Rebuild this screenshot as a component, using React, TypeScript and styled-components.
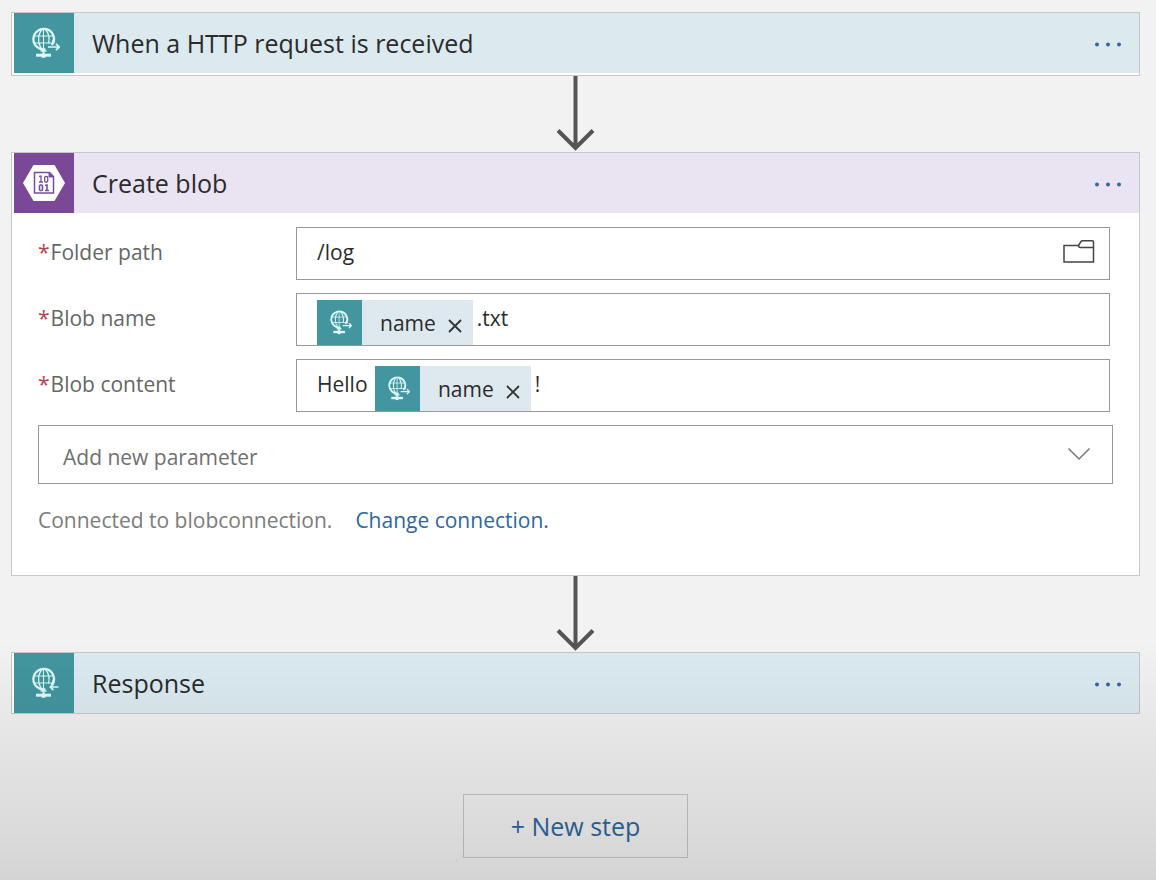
import React from "react";
import styled, { createGlobalStyle } from "styled-components";

const GlobalStyle = createGlobalStyle`
  *, *::before, *::after { box-sizing: border-box; }
  body {
    margin: 0;
    background: #f2f2f2;
    font-family: "Segoe UI", "Open Sans", "Noto Sans", sans-serif;
    font-size: 21px;
    line-height: 30px;
    color: #2b2b2b;
  }
  button, input, select { font: inherit; color: inherit; }
`;

const Designer = styled.main`
  display: flex;
  flex-direction: column;
  min-height: 100vh;
  padding: 12px 16px 22px 11px;

  &::after {
    content: "";
    position: fixed;
    inset: auto 0 0 0;
    height: 240px;
    background: linear-gradient(rgba(0, 0, 0, 0), rgba(0, 0, 0, 0.12));
    pointer-events: none;
  }
`;

const Card = styled.section<{ $trigger?: boolean }>`
  border: 1px solid #c4c8c9;
  padding: 0 0 ${(p) => (p.$trigger ? "2px" : "0")} 2px;
  background: #fff;
`;

const CardHeader = styled.header<{ $tint: string }>`
  display: flex;
  align-items: center;
  height: 60px;
  padding-right: 15px;
  background: ${(p) => p.$tint};
`;

const IconTile = styled.span<{ $color: string; $size: number }>`
  display: grid;
  place-items: center;
  flex: none;
  width: ${(p) => p.$size}px;
  height: ${(p) => p.$size}px;
  background: ${(p) => p.$color};
`;

const CardTitle = styled.h2`
  flex: 1;
  margin: 0 0 0 18px;
  font-size: 25px;
  line-height: 34px;
  font-weight: 400;
`;

const IconButton = styled.button`
  display: grid;
  place-items: center;
  padding: 4px 2px;
  border: 0;
  background: none;
  cursor: pointer;
`;

const ArrowRow = styled.div`
  display: flex;
  justify-content: center;
  height: 76px;
`;

const CardBody = styled.form`
  display: flex;
  flex-direction: column;
  gap: 13px;
  padding: 14px 26px 40px 24px;
`;

const FieldRow = styled.div`
  display: grid;
  grid-template-columns: 258px 1fr;
  padding-right: 3px;
`;

const Label = styled.label`
  padding-top: 10px;
  color: #666;
`;

const Required = styled.span`
  margin-right: 1px;
  color: #b8414f;
`;

const FieldBox = styled.div`
  display: flex;
  align-items: center;
  height: 53px;
  padding: 0 12px 0 20px;
  border: 1px solid #999;
  background: #fff;

  > input, > button { margin-bottom: 4px; }
`;

const TextInput = styled.input<{ $grow?: boolean }>`
  flex: ${(p) => (p.$grow ? "1" : "none")};
  field-sizing: ${(p) => (p.$grow ? "fixed" : "content")};
  min-width: 0;
  height: 46px;
  padding: 0;
  border: 0;
  outline: 0;
  background: none;
`;

const Token = styled.span`
  display: flex;
  align-items: center;
  align-self: flex-end;
  height: 45px;
  margin-right: 4px;
  background: #dde9ef;

  input + & { margin-left: 2px; }
`;

const TokenName = styled.span`
  margin: 0 10px 0 18px;
`;

const TokenRemove = styled.button`
  display: grid;
  place-items: center;
  margin: 6px 9px 0 0;
  padding: 2px;
  border: 0;
  background: none;
  cursor: pointer;
`;

const SelectBox = styled.div`
  display: grid;
  align-items: center;

  > * { grid-area: 1 / 1; }
  > svg { justify-self: end; margin: 0 22px 2px 0; pointer-events: none; }
`;

const Select = styled.select`
  appearance: none;
  width: 100%;
  height: 59px;
  padding: 4px 24px 0;
  border: 1px solid #999;
  border-radius: 0;
  background: #fff;
  color: #707070;
`;

const Connection = styled.p`
  display: flex;
  gap: 23px;
  margin: 8px 0 0;
  color: #7c7c7c;
`;

const Link = styled.a`
  color: #2d679f;
  text-decoration: none;
`;

const NewStep = styled.button`
  align-self: center;
  min-width: 225px;
  height: 64px;
  margin-top: 80px;
  border: 1px solid #c6c6c6;
  background: none;
  color: #2d679f;
  font-size: 25px;
  cursor: pointer;
`;

const TEAL = "#43969f";

function Globe({ size, response }: { size: number; response?: boolean }) {
  return (
    <svg width={size} height={size} viewBox="0 0 32 32" fill="none" stroke="#dcf8f9" aria-hidden="true">
      <path d="M24.800 17A10.300 10.300 0 1 0 17.500 22.300" strokeWidth="2.300" />
      <path d="M15.500 2v20.500M6.500 9h18.500M6.500 16h18" strokeWidth="1" />
      <path d="M14 2.500c-4.500 5-4.500 14.500 0 19.500M17.500 2.500c3.500 4 4.300 8.500 3 14" strokeWidth="1.300" />
      <path d="M25.500 12.500q.3 3-1.800 5.500" strokeWidth="2.200" />
      {response ? (
        <path d="M30.500 20h-8.500M25.500 16.800l-3.200 3.200 3.200 3.200" strokeWidth="1.700" />
      ) : (
        <path d="M20 20h11M28 16.800l3.200 3.200-3.200 3.200" strokeWidth="1.700" />
      )}
      <path d="M15.500 22v5M12.500 24h6" strokeWidth="1.700" />
      <path d="M8 28.200h15" strokeWidth="3" />
      <circle cx="15.500" cy="28.500" r="2.500" fill="#dcf8f9" stroke="none" />
    </svg>
  );
}

function BlobIcon() {
  return (
    <svg width="42" height="38" viewBox="0 0 42 38" fill="none" aria-hidden="true">
      <path d="M10.500 1h21L42 19 31.500 37h-21L0 19z" fill="#fff" />
      <path d="M11.500 8.500h15l4 4v16.500h-19z" stroke="#74509a" strokeWidth="1.500" />
      <path d="M26 8.500v4.500h5z" fill="#74509a" stroke="#74509a" />
      <g stroke="#74509a" strokeWidth="1.300">
        <path d="M16 12.500l2-.5v6M16 18h4" />
        <rect x="21.700" y="12.500" width="3" height="5.500" rx="1" />
        <g strokeWidth="1.600">
          <rect x="16.500" y="21" width="3" height="5.500" rx="1" />
          <path d="M22 21.500l2-.5v6M22 26.500h4" />
        </g>
      </g>
    </svg>
  );
}

function Header({ title, tint, color, children }: { title: string; tint: string; color: string; children: React.ReactNode }) {
  return (
    <CardHeader $tint={tint}>
      <IconTile $color={color} $size={60}>{children}</IconTile>
      <CardTitle>{title}</CardTitle>
      <IconButton type="button" aria-label={`${title} menu`}>
        <svg width="28" height="10" viewBox="0 0 28 10" fill="#33689f" aria-hidden="true">
          <circle cx="3" cy="6.500" r="2" />
          <circle cx="14" cy="6.500" r="2" />
          <circle cx="25" cy="6.500" r="2" />
        </svg>
      </IconButton>
    </CardHeader>
  );
}

function Arrow() {
  return (
    <ArrowRow>
      <svg width="41" height="76" viewBox="0 0 41 76" fill="none" stroke="#555" strokeWidth="4" aria-hidden="true">
        <path d="M20.500 0v72M3 54.500l17.500 17.500 17.500-17.500" />
      </svg>
    </ArrowRow>
  );
}

function NameToken() {
  return (
    <Token>
      <IconTile $color={TEAL} $size={45}>
        <Globe size={25} />
      </IconTile>
      <TokenName>name</TokenName>
      <TokenRemove type="button" aria-label="Remove name">
        <svg width="14" height="14" viewBox="0 0 14 14" stroke="#333" strokeWidth="1.800" aria-hidden="true">
          <path d="M1 1l12 12M13 1L1 13" />
        </svg>
      </TokenRemove>
    </Token>
  );
}

function Field({ id, label, children }: { id: string; label: string; children: React.ReactNode }) {
  return (
    <FieldRow>
      <Label htmlFor={id}>
        <Required>*</Required>
        {label}
      </Label>
      <FieldBox>{children}</FieldBox>
    </FieldRow>
  );
}

export default function App() {
  return (
    <>
      <GlobalStyle />
      <Designer>
        <Card $trigger>
          <Header title="When a HTTP request is received" tint="#dce9ef" color={TEAL}>
            <Globe size={32} />
          </Header>
        </Card>
        <Arrow />
        <Card>
          <Header title="Create blob" tint="#eae3f1" color="#7a4896">
            <BlobIcon />
          </Header>
          <CardBody>
            <Field id="folder-path" label="Folder path">
              <TextInput id="folder-path" $grow defaultValue="/log" />
              <IconButton type="button" aria-label="Browse folders">
                <svg width="32" height="24" viewBox="0 0 32 24" fill="none" stroke="#444" strokeWidth="1.500" aria-hidden="true">
                  <path d="M1 5.500h14.500L18 1.500q.5-.7 1.500-.7H29q1.500 0 1.500 1.500V22H1zM15.500 5.500q0 2 2 2h13" />
                </svg>
              </IconButton>
            </Field>
            <Field id="blob-name" label="Blob name">
              <NameToken />
              <TextInput id="blob-name" $grow defaultValue=".txt" />
            </Field>
            <Field id="blob-content" label="Blob content">
              <TextInput id="blob-content" defaultValue="Hello " />
              <NameToken />
              <TextInput aria-label="Blob content, after name" $grow defaultValue="!" />
            </Field>
            <SelectBox>
              <Select aria-label="Add new parameter" defaultValue="">
                <option value="">Add new parameter</option>
              </Select>
              <svg width="24" height="14" viewBox="0 0 24 14" fill="none" stroke="#777" strokeWidth="1.500" aria-hidden="true">
                <path d="M1.500 1.500L12 12 22.500 1.500" />
              </svg>
            </SelectBox>
            <Connection>
              <span>Connected to blobconnection.</span>
              <Link href="#connection">Change connection.</Link>
            </Connection>
          </CardBody>
        </Card>
        <Arrow />
        <Card>
          <Header title="Response" tint="#dcebf1" color={TEAL}>
            <Globe size={32} response />
          </Header>
        </Card>
        <NewStep type="button">+ New step</NewStep>
      </Designer>
    </>
  );
}
